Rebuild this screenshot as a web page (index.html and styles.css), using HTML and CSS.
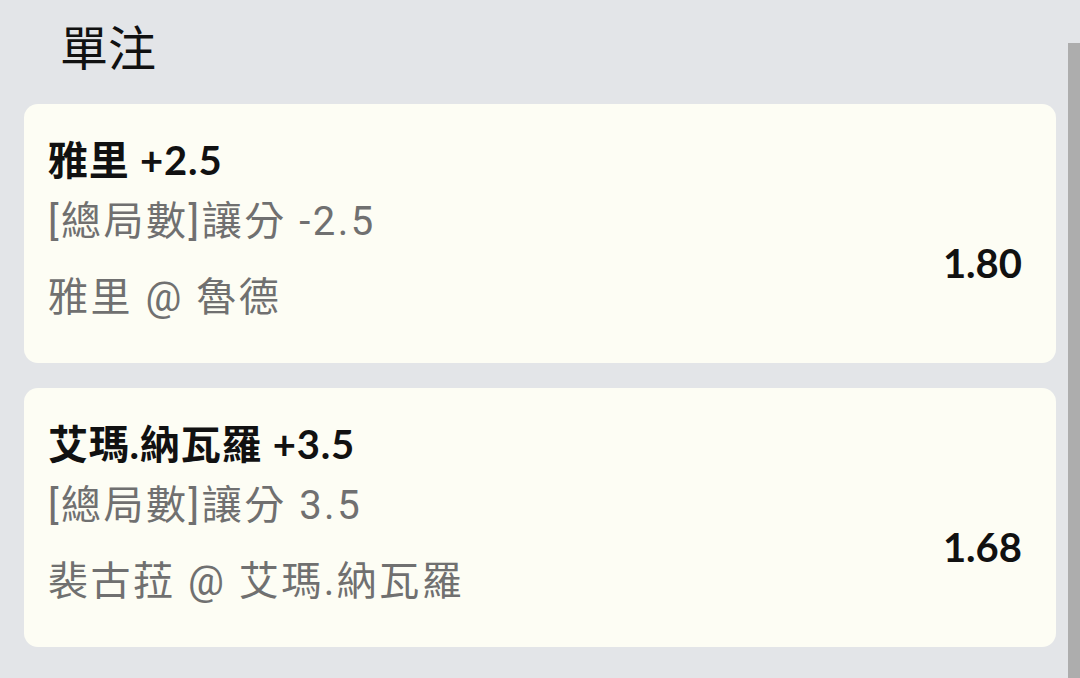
FILE: index.html
```html
<!DOCTYPE html>
<html lang="zh-Hant">
<head>
    <meta charset="UTF-8">
    <meta name="viewport" content="width=device-width, initial-scale=1.0">
    <title>單注</title>
    <link rel="stylesheet" href="styles.css">
</head>
<body>
    <h1 class="page-title">單注</h1>

    <div class="bet-list">
        <div class="bet-card">
            <div class="bet-pick">雅里 +2.5</div>
            <div class="bet-row">
                <div class="bet-info">
                    <div class="bet-market">[總局數]讓分 -2.5</div>
                    <div class="bet-match">雅里 @ 魯德</div>
                </div>
                <div class="bet-odds">1.80</div>
            </div>
        </div>

        <div class="bet-card">
            <div class="bet-pick">艾瑪.納瓦羅 +3.5</div>
            <div class="bet-row">
                <div class="bet-info">
                    <div class="bet-market">[總局數]讓分 3.5</div>
                    <div class="bet-match">裴古菈 @ 艾瑪.納瓦羅</div>
                </div>
                <div class="bet-odds">1.68</div>
            </div>
        </div>
    </div>

    <div class="scroll-thumb"></div>
</body>
</html>
```

FILE: styles.css
```css
body {
    margin: 0;
    background-color: #e3e5e8;
    font-family: Roboto, "Noto Sans CJK TC", sans-serif;
    overflow: hidden;
}
.page-title {
    margin: 0 0 28px 0;
    padding: 14px 0 0 60px;
    font-family: "Noto Sans CJK TC", sans-serif;
    font-size: 48px;
    font-weight: 400;
    line-height: 62px;
    color: #111;
}
.bet-list {
    display: flex;
    flex-direction: column;
    gap: 25px;
    margin: 0 24px;
}
.bet-card {
    background: #fdfdf4;
    border-radius: 14px;
    padding: 32px 34px 39px 24px;
}
.bet-pick {
    font-family: Lato, "Noto Sans CJK TC", sans-serif;
    font-weight: 700;
    font-size: 40px;
    letter-spacing: 0.8px;
    line-height: 48px;
    color: #111;
    margin-bottom: 12px;
}
.bet-row {
    display: flex;
    align-items: center;
    justify-content: space-between;
}
.bet-info {
    display: flex;
    flex-direction: column;
    gap: 24px;
}
.bet-market,
.bet-match {
    font-size: 40px;
    letter-spacing: 2.5px;
    line-height: 52px;
    color: #707070;
}
.bet-odds {
    font-family: Lato, sans-serif;
    font-weight: 700;
    font-size: 40px;
    color: #111;
    padding-top: 6px;
}
.scroll-thumb {
    position: fixed;
    top: 43px;
    right: 0;
    bottom: 0;
    width: 12px;
    background: #adadad;
}
```
